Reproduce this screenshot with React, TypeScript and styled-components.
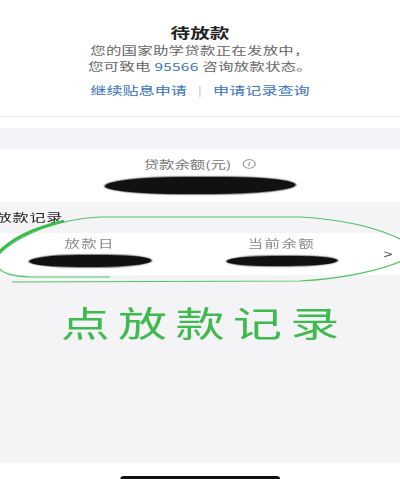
import styled, { createGlobalStyle } from "styled-components";

const GlobalStyle = createGlobalStyle`
  html, body {
    margin: 0;
    padding: 0;
    background: #ffffff;
    overflow: hidden;
  }
  body {
    font-family: "Noto Sans CJK SC", "Liberation Sans", sans-serif;
  }
`;

// the screenshot is stretched sideways, so the page is laid out narrow and scaled
const STRETCH = 1.4;

const App = () => {
  return (
    <>
      <GlobalStyle />
      <Page>
        <TopCard>
          <Title>待放款</Title>
          <Desc>
            您的国家助学贷款正在发放中，
            <br />
            您可致电 <Phone>95566</Phone> 咨询放款状态。
          </Desc>
          <LinkRow>
            <LinkText>继续贴息申请</LinkText>
            <Sep>|</Sep>
            <LinkText>申请记录查询</LinkText>
          </LinkRow>
        </TopCard>
        <Gap />
        <BalanceCard>
          <BalanceLabel>
            贷款余额(元)
            <InfoIcon viewBox="0 0 12 12">
              <circle cx="6" cy="6" r="5.2" fill="none" stroke="#888" strokeWidth="0.9" />
              <line x1="6.6" y1="3.4" x2="5.4" y2="8.6" stroke="#888" strokeWidth="0.9" />
            </InfoIcon>
          </BalanceLabel>
          <Scribble $w={136} $h={17} $top={5} />
        </BalanceCard>
        <Records>
          <SectionTitle>放款记录</SectionTitle>
          <RecordRow>
            <RecordCol>
              <ColLabel>放款日</ColLabel>
              <Scribble $w={87} $h={12} $top={4} />
            </RecordCol>
            <RecordCol>
              <ColLabel>当前余额</ColLabel>
              <Scribble $w={79} $h={10} $top={5} />
            </RecordCol>
            <Chevron>&gt;</Chevron>
          </RecordRow>
          <Circle viewBox="0 200 400 90" preserveAspectRatio="none">
            <path
              d="M -2 256 C 20 234, 60 220, 100 218 L 300 218 C 340 220, 378 228, 404 242"
              fill="none"
              stroke="#52c463"
              strokeWidth="1.2"
              vectorEffect="non-scaling-stroke"
            />
            <path
              d="M -2 254 C 12 240, 30 230, 64 222"
              fill="none"
              stroke="#3dbb4f"
              strokeWidth="2.4"
              vectorEffect="non-scaling-stroke"
            />
            <path
              d="M -2 268 C 2 274, 10 277, 30 278 L 110 278"
              fill="none"
              stroke="#52c463"
              strokeWidth="1.1"
              vectorEffect="non-scaling-stroke"
            />
            <path
              d="M 12 283 L 300 282 C 340 280, 380 272, 404 261"
              fill="none"
              stroke="#52c463"
              strokeWidth="1.2"
              vectorEffect="non-scaling-stroke"
            />
          </Circle>
          <Hint>点放款记录</Hint>
        </Records>
        <Footer>
          <HomeBar />
        </Footer>
      </Page>
    </>
  );
};

const Page = styled.div`
  width: calc(400px / ${STRETCH});
  height: 479px;
  transform: scaleX(${STRETCH});
  transform-origin: 0 0;
  display: flex;
  flex-direction: column;
  background: #f4f4f6;
`;

const TopCard = styled.div`
  background: #ffffff;
  height: 117px;
  box-sizing: border-box;
  padding-top: 22px;
  border-bottom: 1px solid #eceef4;
  display: flex;
  flex-direction: column;
  align-items: center;
  text-align: center;
`;

const Title = styled.div`
  font-size: 14px;
  line-height: 20px;
  font-weight: 700;
  color: #222;
`;

const Desc = styled.div`
  font-size: 11px;
  line-height: 16px;
  color: #666;
  letter-spacing: 0.2px;
`;

const Phone = styled.span`
  color: #3b74bd;
`;

const LinkRow = styled.div`
  margin-top: 8px;
  display: flex;
  align-items: center;
  font-size: 11.5px;
  line-height: 16px;
`;

const LinkText = styled.span`
  color: #3a73c0;
`;

const Sep = styled.span`
  color: #bbb;
  margin: 0 8px;
  font-size: 10px;
`;

const Gap = styled.div`
  height: 32px;
  background: linear-gradient(#ffffff 0 11px, #f3f4f9 11px);
`;

const BalanceCard = styled.div`
  background: #ffffff;
  height: 53px;
  box-sizing: border-box;
  padding-top: 7px;
  display: flex;
  flex-direction: column;
  align-items: center;
`;

const BalanceLabel = styled.div`
  font-size: 11px;
  line-height: 16px;
  color: #777;
  display: flex;
  align-items: center;
`;

const InfoIcon = styled.svg`
  width: 10px;
  height: 10px;
  margin-left: 8px;
`;

const Scribble = styled.div<{ $w: number; $h: number; $top: number }>`
  width: ${(p) => p.$w}px;
  height: ${(p) => p.$h}px;
  margin-top: ${(p) => p.$top}px;
  background: #111;
  border-radius: 45% 40% 50% 45% / 60% 50% 60% 50%;
  box-shadow: 0 0 1px 1px rgba(0, 0, 0, 0.5);
`;

const Records = styled.div`
  position: relative;
  flex: 1;
  padding-top: 7px;
  display: flex;
  flex-direction: column;
`;

const SectionTitle = styled.div`
  font-size: 11.5px;
  line-height: 16px;
  color: #222;
  margin-left: -3px;
  letter-spacing: 0.5px;
`;

const RecordRow = styled.div`
  margin-top: 8px;
  height: 42px;
  background: #ffffff;
  display: grid;
  grid-template-columns: 128px 134px 1fr;
  column-gap: 6px;
  padding-top: 2px;
  box-sizing: border-box;
`;

const RecordCol = styled.div`
  display: flex;
  flex-direction: column;
  align-items: center;
`;

const ColLabel = styled.div`
  font-size: 11px;
  line-height: 16px;
  color: #8a8a8a;
  letter-spacing: 1px;
`;

const Chevron = styled.div`
  font-family: "Liberation Sans", sans-serif;
  font-size: 11px;
  color: #444;
  align-self: center;
  margin-bottom: 2px;
`;

const Circle = styled.svg`
  position: absolute;
  left: 0;
  top: -3px;
  width: 100%;
  height: 90px;
  pointer-events: none;
  overflow: visible;
`;

const Hint = styled.div`
  margin-top: 27px;
  text-align: center;
  font-size: 35px;
  line-height: 40px;
  letter-spacing: 6px;
  color: #3fba4e;
  padding-left: 6px;
`;

const Footer = styled.div`
  height: 16px;
  background: #ffffff;
  display: flex;
  justify-content: center;
  align-items: flex-end;
  overflow: hidden;
`;

const HomeBar = styled.div`
  width: 114px;
  height: 5px;
  border-radius: 3px;
  background: #111;
  margin-bottom: -2px;
`;

export default App;
